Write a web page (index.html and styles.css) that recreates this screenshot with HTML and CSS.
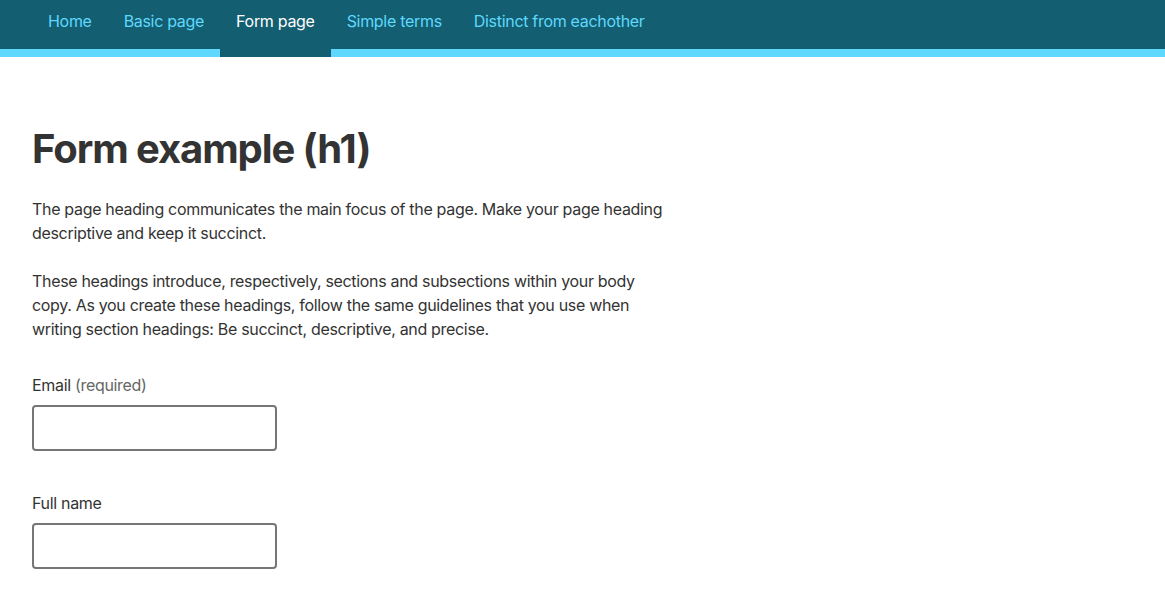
FILE: index.html
```html
<!DOCTYPE html>
<html lang="en">
<head>
<meta charset="utf-8">
<title>Form example</title>
<link rel="stylesheet" href="styles.css">
</head>
<body>
<header class="site-header">
  <nav class="nav">
    <a class="nav-link" href="#">Home</a>
    <a class="nav-link" href="#">Basic page</a>
    <a class="nav-link is-active" href="#">Form page</a>
    <a class="nav-link" href="#">Simple terms</a>
    <a class="nav-link" href="#">Distinct from eachother</a>
  </nav>
</header>
<main class="main">
  <h1 class="page-title">Form example (h1)</h1>
  <p class="body-text">The page heading communicates the main focus of the page. Make your page heading descriptive and keep it succinct.</p>
  <p class="body-text">These headings introduce, respectively, sections and subsections within your body copy. As you create these headings, follow the same guidelines that you use when writing section headings: Be succinct, descriptive, and precise.</p>
  <form class="form">
    <div class="field">
      <label class="label" for="email">Email <span class="hint">(required)</span></label>
      <input class="input" id="email" type="email">
    </div>
    <div class="field">
      <label class="label" for="name">Full name</label>
      <input class="input" id="name" type="text">
    </div>
  </form>
</main>
</body>
</html>
```
FILE: styles.css
```css
* { box-sizing: border-box; }
html, body { margin: 0; padding: 0; }
body {
  font-family: Inter, "Liberation Sans", sans-serif;
  color: #333;
  background: #fff;
  letter-spacing: -0.02em;
}
.site-header {
  background: #135e70;
  border-bottom: 8px solid #5fd8fd;
}
.nav {
  display: flex;
  padding-left: 32px;
  height: 49px;
}
.nav-link {
  display: block;
  padding: 0 16px;
  line-height: 42px;
  font-size: 16px;
  letter-spacing: -0.019em;
  color: #5fd8fd;
  text-decoration: none;
}
.nav-link.is-active {
  color: #fff;
  background: #135e70;
  height: 57px;
  position: relative;
  z-index: 1;
}
.main {
  padding: 68px 32px 0;
}
.page-title {
  margin: 0 0 24px;
  font-size: 40px;
  line-height: 48px;
  font-weight: 700;
  letter-spacing: -0.027em;
  color: #333;
}
.body-text {
  margin: 0 0 24px;
  max-width: 640px;
  font-size: 16px;
  line-height: 24px;
}
.form {
  margin-top: 32px;
}
.field {
  margin-bottom: 40px;
}
.label {
  display: block;
  font-size: 16px;
  line-height: 24px;
  margin-bottom: 8px;
}
.hint {
  color: #666;
}
.input {
  display: block;
  width: 245px;
  height: 46px;
  border: 2px solid #767676;
  border-radius: 4px;
  background: #fff;
  font: inherit;
}
```
